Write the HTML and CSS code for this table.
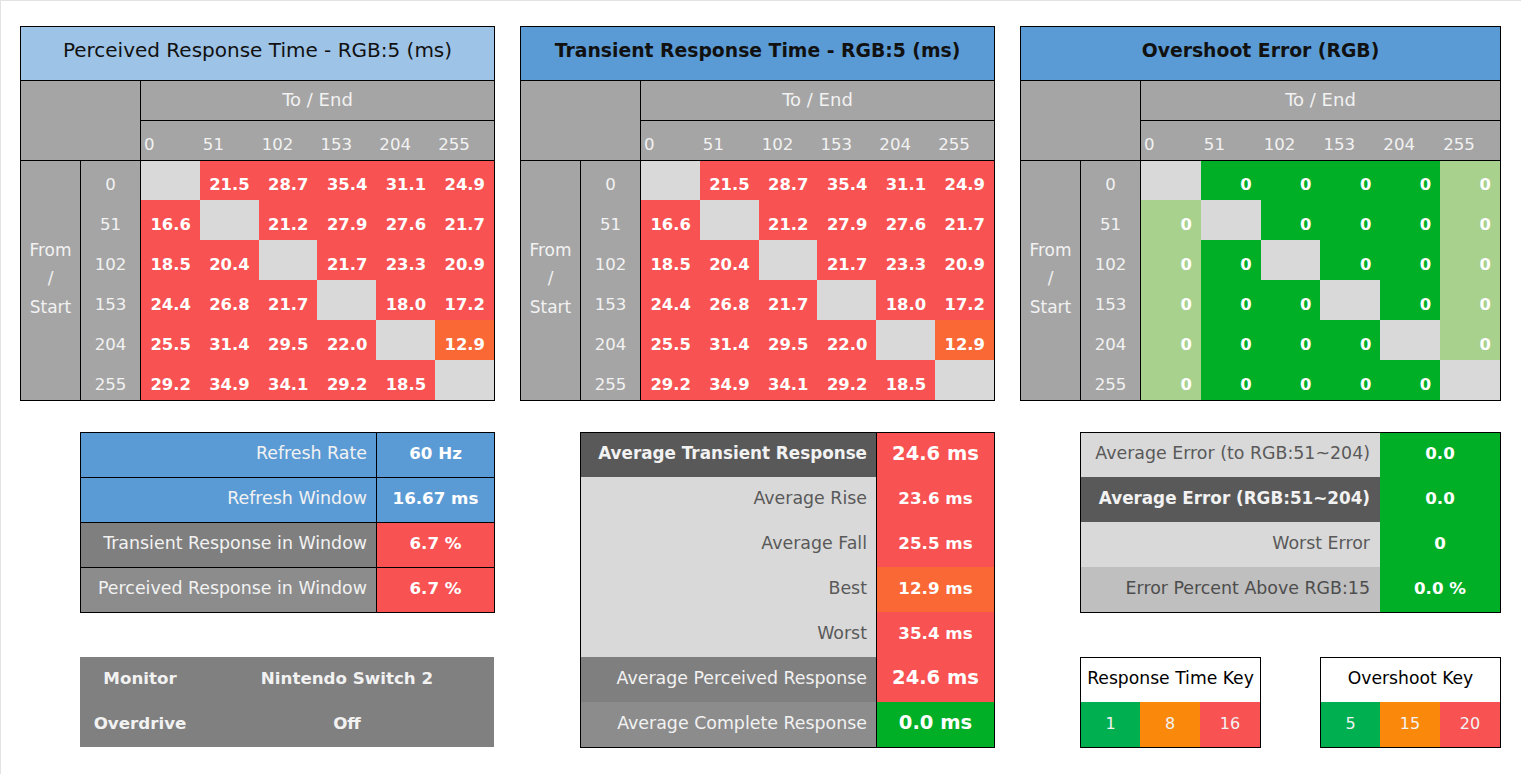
FILE: index.html
```html
<!DOCTYPE html>
<html lang="en">
<head>
<meta charset="utf-8">
<title>Response Time Report</title>
<link rel="stylesheet" href="styles.css">
</head>
<body>
<main class="page">

  <section class="mx">
    <div class="mx-title light">Perceived Response Time - RGB:5 (ms)</div>
    <div class="mx-corner"></div>
    <div class="mx-to">To / End</div>
    <div class="mx-col">0</div><div class="mx-col">51</div><div class="mx-col">102</div><div class="mx-col">153</div><div class="mx-col">204</div><div class="mx-col">255</div>
    <div class="mx-from">From<br>/<br>Start</div>
    <div class="mx-row">0</div><div class="c d"></div><div class="c r">21.5</div><div class="c r">28.7</div><div class="c r">35.4</div><div class="c r">31.1</div><div class="c r">24.9</div>
    <div class="mx-row">51</div><div class="c r">16.6</div><div class="c d"></div><div class="c r">21.2</div><div class="c r">27.9</div><div class="c r">27.6</div><div class="c r">21.7</div>
    <div class="mx-row">102</div><div class="c r">18.5</div><div class="c r">20.4</div><div class="c d"></div><div class="c r">21.7</div><div class="c r">23.3</div><div class="c r">20.9</div>
    <div class="mx-row">153</div><div class="c r">24.4</div><div class="c r">26.8</div><div class="c r">21.7</div><div class="c d"></div><div class="c r">18.0</div><div class="c r">17.2</div>
    <div class="mx-row">204</div><div class="c r">25.5</div><div class="c r">31.4</div><div class="c r">29.5</div><div class="c r">22.0</div><div class="c d"></div><div class="c o">12.9</div>
    <div class="mx-row">255</div><div class="c r">29.2</div><div class="c r">34.9</div><div class="c r">34.1</div><div class="c r">29.2</div><div class="c r">18.5</div><div class="c d"></div>
  </section>

  <section class="mx">
    <div class="mx-title">Transient Response Time - RGB:5 (ms)</div>
    <div class="mx-corner"></div>
    <div class="mx-to">To / End</div>
    <div class="mx-col">0</div><div class="mx-col">51</div><div class="mx-col">102</div><div class="mx-col">153</div><div class="mx-col">204</div><div class="mx-col">255</div>
    <div class="mx-from">From<br>/<br>Start</div>
    <div class="mx-row">0</div><div class="c d"></div><div class="c r">21.5</div><div class="c r">28.7</div><div class="c r">35.4</div><div class="c r">31.1</div><div class="c r">24.9</div>
    <div class="mx-row">51</div><div class="c r">16.6</div><div class="c d"></div><div class="c r">21.2</div><div class="c r">27.9</div><div class="c r">27.6</div><div class="c r">21.7</div>
    <div class="mx-row">102</div><div class="c r">18.5</div><div class="c r">20.4</div><div class="c d"></div><div class="c r">21.7</div><div class="c r">23.3</div><div class="c r">20.9</div>
    <div class="mx-row">153</div><div class="c r">24.4</div><div class="c r">26.8</div><div class="c r">21.7</div><div class="c d"></div><div class="c r">18.0</div><div class="c r">17.2</div>
    <div class="mx-row">204</div><div class="c r">25.5</div><div class="c r">31.4</div><div class="c r">29.5</div><div class="c r">22.0</div><div class="c d"></div><div class="c o">12.9</div>
    <div class="mx-row">255</div><div class="c r">29.2</div><div class="c r">34.9</div><div class="c r">34.1</div><div class="c r">29.2</div><div class="c r">18.5</div><div class="c d"></div>
  </section>

  <section class="mx">
    <div class="mx-title">Overshoot Error (RGB)</div>
    <div class="mx-corner"></div>
    <div class="mx-to">To / End</div>
    <div class="mx-col">0</div><div class="mx-col">51</div><div class="mx-col">102</div><div class="mx-col">153</div><div class="mx-col">204</div><div class="mx-col">255</div>
    <div class="mx-from">From<br>/<br>Start</div>
    <div class="mx-row">0</div><div class="c d"></div><div class="c g">0</div><div class="c g">0</div><div class="c g">0</div><div class="c g">0</div><div class="c lg">0</div>
    <div class="mx-row">51</div><div class="c lg">0</div><div class="c d"></div><div class="c g">0</div><div class="c g">0</div><div class="c g">0</div><div class="c lg">0</div>
    <div class="mx-row">102</div><div class="c lg">0</div><div class="c g">0</div><div class="c d"></div><div class="c g">0</div><div class="c g">0</div><div class="c lg">0</div>
    <div class="mx-row">153</div><div class="c lg">0</div><div class="c g">0</div><div class="c g">0</div><div class="c d"></div><div class="c g">0</div><div class="c lg">0</div>
    <div class="mx-row">204</div><div class="c lg">0</div><div class="c g">0</div><div class="c g">0</div><div class="c g">0</div><div class="c d"></div><div class="c lg">0</div>
    <div class="mx-row">255</div><div class="c lg">0</div><div class="c g">0</div><div class="c g">0</div><div class="c g">0</div><div class="c g">0</div><div class="c d"></div>
  </section>

  <div class="col">
    <div class="panel stats">
      <div class="lbl bl">Refresh Rate</div><div class="val bl">60 Hz</div>
      <div class="lbl bl">Refresh Window</div><div class="val bl">16.67 ms</div>
      <div class="lbl mid">Transient Response in Window</div><div class="val red">6.7 %</div>
      <div class="lbl mid2">Perceived Response in Window</div><div class="val red">6.7 %</div>
    </div>
    <div class="mon">
      <div>Monitor</div><div>Nintendo Switch 2</div>
      <div>Overdrive</div><div>Off</div>
    </div>
  </div>

  <div class="col">
    <div class="panel avg">
      <div class="lbl dk strong">Average Transient Response</div><div class="val red big">24.6 ms</div>
      <div class="lbl lt">Average Rise</div><div class="val red">23.6 ms</div>
      <div class="lbl lt">Average Fall</div><div class="val red">25.5 ms</div>
      <div class="lbl lt">Best</div><div class="val org">12.9 ms</div>
      <div class="lbl lt">Worst</div><div class="val red">35.4 ms</div>
      <div class="lbl mid">Average Perceived Response</div><div class="val red big">24.6 ms</div>
      <div class="lbl mid2">Average Complete Response</div><div class="val grn big">0.0 ms</div>
    </div>
  </div>

  <div class="col">
    <div class="panel err">
      <div class="lbl lt">Average Error (to RGB:51~204)</div><div class="val grn">0.0</div>
      <div class="lbl dk strong">Average Error (RGB:51~204)</div><div class="val grn">0.0</div>
      <div class="lbl lt">Worst Error</div><div class="val grn">0</div>
      <div class="lbl lt2">Error Percent Above RGB:15</div><div class="val grn">0.0 %</div>
    </div>
    <div class="keys">
      <div class="key">
        <div class="key-title">Response Time Key</div>
        <div class="key-c kg">1</div><div class="key-c ko">8</div><div class="key-c kr">16</div>
      </div>
      <div class="key">
        <div class="key-title">Overshoot Key</div>
        <div class="key-c kg">5</div><div class="key-c ko">15</div><div class="key-c kr">20</div>
      </div>
    </div>
  </div>

</main>
</body>
</html>
```

FILE: styles.css
```css
* { box-sizing: border-box; }

html, body { margin: 0; padding: 0; }

body {
  width: 1521px;
  height: 774px;
  overflow: hidden;
  background: #fff;
  border-top: 1px solid #e3e3e3;
  border-left: 1px solid #e3e3e3;
  font-family: "DejaVu Sans", Verdana, sans-serif;
}

.page {
  display: grid;
  grid-template-columns: 475px 475px 481px;
  column-gap: 25px;
  row-gap: 31px;
  align-items: start;
  padding: 25px 0 0 19px;
}

/* ---------- matrices ---------- */
.mx {
  display: grid;
  grid-template-columns: 60px 60px repeat(6, 1fr);
  grid-template-rows: 54px 40px 40px 39px repeat(5, 40px);
  border: 1px solid #000;
}

.mx-title {
  grid-column: 1 / -1;
  display: flex;
  align-items: center;
  justify-content: center;
  padding-bottom: 7px;
  background: #5b9bd5;
  border-bottom: 1px solid #000;
  color: #111;
  font-weight: bold;
  font-size: 18.8px;
}

.mx-title.light {
  background: #9dc3e6;
  font-weight: normal;
  font-size: 20px;
}

.mx-corner {
  grid-column: 1 / 3;
  grid-row: 2 / 4;
  background: #a5a5a5;
  border-right: 1px solid #000;
  border-bottom: 1px solid #000;
}

.mx-to {
  grid-column: 3 / -1;
  display: flex;
  align-items: center;
  justify-content: center;
  padding-bottom: 3px;
  background: #a5a5a5;
  border-bottom: 1px solid #000;
  color: #f2f2f2;
  font-size: 18px;
}

.mx-col {
  display: flex;
  align-items: flex-end;
  padding: 0 0 6px 3px;
  background: #a5a5a5;
  border-bottom: 1px solid #000;
  color: #f2f2f2;
  font-size: 16.6px;
}

.mx-from {
  grid-column: 1;
  grid-row: 4 / span 6;
  display: flex;
  align-items: center;
  justify-content: center;
  padding-bottom: 4px;
  text-align: center;
  background: #a5a5a5;
  border-right: 1px solid #000;
  color: #f2f2f2;
  font-size: 17px;
  line-height: 28.5px;
}

.mx-row {
  display: flex;
  align-items: flex-end;
  justify-content: center;
  padding-bottom: 6px;
  background: #a5a5a5;
  border-right: 1px solid #000;
  color: #f2f2f2;
  font-size: 16.6px;
}

.c {
  display: flex;
  align-items: flex-end;
  justify-content: flex-end;
  padding: 0 9px 6px 0;
  color: #fff;
  font-weight: bold;
  font-size: 16.4px;
}

.c.r { background: #f85252; }
.c.o { background: #f96835; }
.c.d { background: #d9d9d9; }
.c.g { background: #00af26; }
.c.lg { background: #a9d18e; }

/* ---------- lower panels ---------- */
.col {
  display: flex;
  flex-direction: column;
  gap: 44px;
  padding-left: 60px;
}

.panel {
  display: grid;
  border: 1px solid #000;
}

.panel > div {
  display: flex;
  align-items: center;
  padding-bottom: 4px;
}

.lbl {
  justify-content: flex-end;
  padding-right: 9px;
  color: #f2f2f2;
  font-size: 17.4px;
  white-space: nowrap;
}

.lbl.strong {
  font-weight: bold;
  font-size: 16.8px;
}

.val {
  justify-content: center;
  color: #fff;
  font-weight: bold;
  font-size: 16.7px;
}

.val.big { font-size: 19.5px; }

.bl { background: #5b9bd5; }
.dk { background: #595959; }
.mid { background: #7f7f7f; }
.mid2 { background: #8c8c8c; }
.lt { background: #d9d9d9; color: #595959; }
.lt2 { background: #bfbfbf; color: #4d4d4d; }
.red { background: #f85252; }
.org { background: #f96835; }
.grn { background: #00af26; }

.stats {
  width: 415px;
  grid-template-columns: 296px 1fr;
  grid-template-rows: 45px 45px 45px 44px;
}

.stats > div { border-bottom: 1px solid #000; }
.stats > div:nth-last-child(-n+2) { border-bottom: 0; }
.stats > .lbl { border-right: 1px solid #000; }

.avg {
  width: 415px;
  grid-template-columns: 296px 1fr;
  grid-template-rows: 44px repeat(6, 45px);
}

.avg > .lbl { border-right: 1px solid #000; }

.err {
  width: 421px;
  grid-template-columns: 299px 1fr;
  grid-template-rows: 44px 45px 45px 45px;
}

.err > .lbl { padding-right: 10px; }

.mon {
  display: grid;
  width: 414px;
  grid-template-columns: 120px 1fr;
  grid-template-rows: 45px 45px;
  background: #808080;
  color: #f2f2f2;
  font-weight: bold;
  font-size: 16.7px;
}

.mon > div {
  display: flex;
  align-items: center;
  justify-content: center;
  padding-bottom: 4px;
}

/* ---------- keys ---------- */
.keys {
  display: flex;
  justify-content: space-between;
  width: 421px;
}

.key {
  width: 181px;
  display: grid;
  grid-template-columns: 59px 60px 60px;
  grid-template-rows: 44px 45px;
  border: 1px solid #000;
}

.key-title {
  grid-column: 1 / -1;
  display: flex;
  align-items: center;
  justify-content: center;
  padding-bottom: 4px;
  background: #fff;
  color: #000;
  font-size: 17.2px;
}

.key-c {
  display: flex;
  align-items: center;
  justify-content: center;
  padding-bottom: 2px;
  color: #f2f2f2;
  font-size: 16px;
}

.kg { background: #00b050; }
.ko { background: #fa880b; }
.kr { background: #f85252; }
```
